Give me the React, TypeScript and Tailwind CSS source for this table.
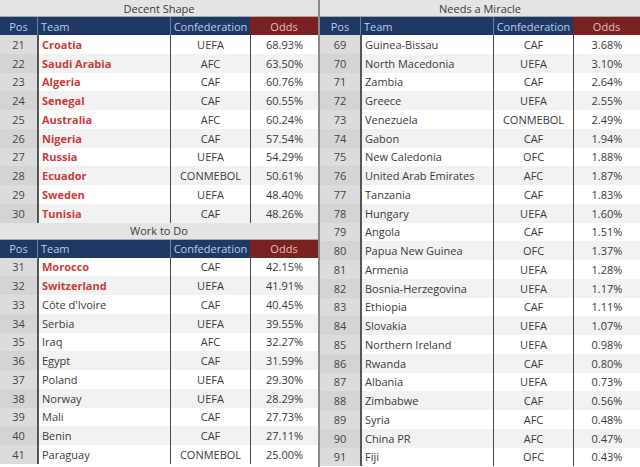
import React from "react";

type Row = [number, string, string, string, boolean?];

const decent: Row[] = [
  [21, "Croatia", "UEFA", "68.93%", true],
  [22, "Saudi Arabia", "AFC", "63.50%", true],
  [23, "Algeria", "CAF", "60.76%", true],
  [24, "Senegal", "CAF", "60.55%", true],
  [25, "Australia", "AFC", "60.24%", true],
  [26, "Nigeria", "CAF", "57.54%", true],
  [27, "Russia", "UEFA", "54.29%", true],
  [28, "Ecuador", "CONMEBOL", "50.61%", true],
  [29, "Sweden", "UEFA", "48.40%", true],
  [30, "Tunisia", "CAF", "48.26%", true],
];

const work: Row[] = [
  [31, "Morocco", "CAF", "42.15%", true],
  [32, "Switzerland", "UEFA", "41.91%", true],
  [33, "Côte d'Ivoire", "CAF", "40.45%"],
  [34, "Serbia", "UEFA", "39.55%"],
  [35, "Iraq", "AFC", "32.27%"],
  [36, "Egypt", "CAF", "31.59%"],
  [37, "Poland", "UEFA", "29.30%"],
  [38, "Norway", "UEFA", "28.29%"],
  [39, "Mali", "CAF", "27.73%"],
  [40, "Benin", "CAF", "27.11%"],
  [41, "Paraguay", "CONMEBOL", "25.00%"],
];

const miracle: Row[] = [
  [69, "Guinea-Bissau", "CAF", "3.68%"],
  [70, "North Macedonia", "UEFA", "3.10%"],
  [71, "Zambia", "CAF", "2.64%"],
  [72, "Greece", "UEFA", "2.55%"],
  [73, "Venezuela", "CONMEBOL", "2.49%"],
  [74, "Gabon", "CAF", "1.94%"],
  [75, "New Caledonia", "OFC", "1.88%"],
  [76, "United Arab Emirates", "AFC", "1.87%"],
  [77, "Tanzania", "CAF", "1.83%"],
  [78, "Hungary", "UEFA", "1.60%"],
  [79, "Angola", "CAF", "1.51%"],
  [80, "Papua New Guinea", "OFC", "1.37%"],
  [81, "Armenia", "UEFA", "1.28%"],
  [82, "Bosnia-Herzegovina", "UEFA", "1.17%"],
  [83, "Ethiopia", "CAF", "1.11%"],
  [84, "Slovakia", "UEFA", "1.07%"],
  [85, "Northern Ireland", "UEFA", "0.98%"],
  [86, "Rwanda", "CAF", "0.80%"],
  [87, "Albania", "UEFA", "0.73%"],
  [88, "Zimbabwe", "CAF", "0.56%"],
  [89, "Syria", "AFC", "0.48%"],
  [90, "China PR", "AFC", "0.47%"],
  [91, "Fiji", "OFC", "0.43%"],
];

function Section({ title, rows, cols }: { title: string; rows: Row[]; cols: string }) {
  return (
    <div>
      {/* title bar */}
      <div className="h-[17px] bg-[#e4e4e4] border-b border-[#a8a8a8] flex items-center justify-center text-[11px] text-[#3a3a3a] leading-none">
        {title}
      </div>
      {/* header */}
      <div className={`grid ${cols} h-[18px] text-[11px] leading-none`}>
        <div className="bg-[#1f3864] text-[#b9cde6] flex items-center justify-center">Pos</div>
        <div className="bg-[#1f3864] text-[#b9cde6] flex items-center pl-[3px] border-l border-[#6d7f99]">Team</div>
        <div className="bg-[#1f3864] text-[#b9cde6] flex items-center justify-center border-l border-[#6d7f99]">Confederation</div>
        <div className="bg-[#7a2222] text-[#e8bcbc] flex items-center justify-center">Odds</div>
      </div>
      {rows.map(([pos, team, conf, odds, hot], i) => (
        <div
          key={pos}
          className={`grid ${cols} h-[18.75px] text-[11px] leading-none ${i % 2 ? "bg-[#f2f2f2]" : "bg-white"}`}
        >
          <div className={`flex items-center justify-center text-[#454545] ${i % 2 ? "bg-[#d4d4d4]" : "bg-[#dcdcdc]"}`}>{pos}</div>
          <div
            className={`flex items-center pl-[3px] border-l-2 border-[#555] whitespace-nowrap ${
              hot ? "text-[#cc3b3b] font-bold" : "text-[#3a3a3a]"
            }`}
          >
            {team}
          </div>
          <div className="flex items-center justify-center border-l border-[#4a4a4a] text-[#3a3a3a]">{conf}</div>
          <div className="flex items-center justify-center border-l border-[#4a4a4a] text-[#3a3a3a]">{odds}</div>
        </div>
      ))}
    </div>
  );
}

export default function App() {
  return (
    <div
      className="w-[640px] h-[467px] overflow-hidden bg-white flex"
      style={{ fontFamily: "'Open Sans', Lato, sans-serif" }}
    >
      <div className="w-[318px] flex flex-col">
        <Section title="Decent Shape" rows={decent} cols="grid-cols-[37px_133px_80px_68px]" />
        <Section title="Work to Do" rows={work} cols="grid-cols-[37px_133px_80px_68px]" />
      </div>
      <div className="w-[2px] bg-[#8a8a8a]" />
      <div className="w-[320px] flex flex-col">
        <Section title="Needs a Miracle" rows={miracle} cols="grid-cols-[40px_133px_80px_67px]" />
      </div>
    </div>
  );
}
